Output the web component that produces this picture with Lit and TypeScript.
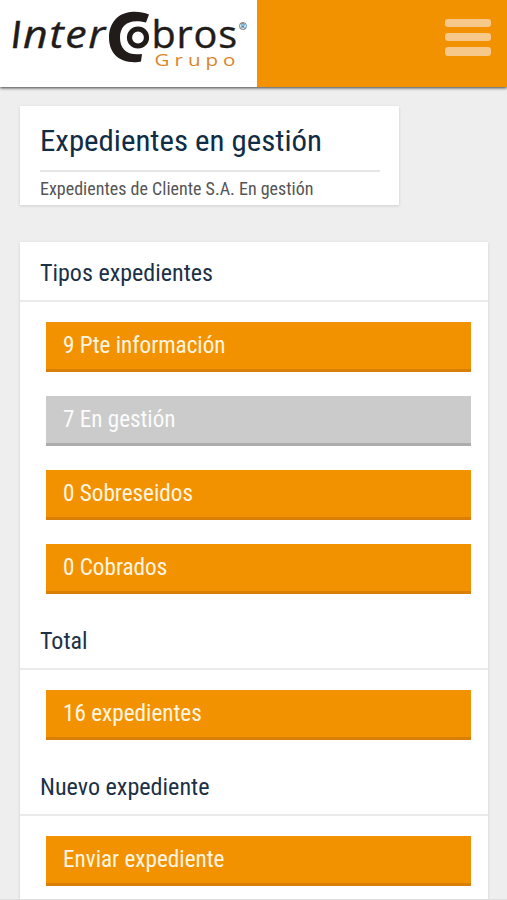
import { LitElement, html, css, svg } from "lit";
import { customElement, property } from "lit/decorators.js";

@customElement("condensed-label")
class CondensedLabel extends LitElement {
  @property() text = "";
  @property({ type: Number }) span = 100;
  @property({ type: Number }) baseline = 20;

  static styles = css`
    :host { display: block; height: 36px; }
    .line { display: block; width: 100%; height: 100%; overflow: visible; fill: currentColor; font-stretch: 75%; }
  `;

  render() {
    return html`<svg class="line">${svg`<text x="0" y=${this.baseline} textLength=${this.span} lengthAdjust="spacingAndGlyphs">${this.text}</text>`}</svg>`;
  }
}

@customElement("brand-logo")
class BrandLogo extends LitElement {
  static styles = css`
    :host { display: block; width: 257px; height: 87px; background: #fff; }
    .logo { display: block; }
    .word { font-family: "Open Sans", "Noto Sans", sans-serif; font-size: 37.5px; font-weight: 500; letter-spacing: 0.8px; fill: #211b19; stroke: #211b19; stroke-width: 0.4px; }
    .italic { font-style: italic; letter-spacing: 1.5px; }
    .initial { font-family: Lato, sans-serif; font-weight: 400; stroke-width: 0.5px; }
    .group { font-family: "Open Sans", "Noto Sans", sans-serif; font-size: 16.5px; font-weight: 500; letter-spacing: 4px; fill: #d9862b; }
    .mark { font-family: "Open Sans", "Noto Sans", sans-serif; font-size: 10px; font-weight: 700; fill: #55504e; }
    .ring { fill: none; stroke: #211b19; }
  `;

  render() {
    return html`
      <svg class="logo" width="257" height="87" viewBox="0 0 257 87">
        <text class="word italic initial" x="11.3" y="47.5">I</text>
        <text class="word italic" x="23" y="47.5" textLength="84" lengthAdjust="spacingAndGlyphs">nter</text>
        <path fill="#211b19" d="M149 14.5 C144 12.5 139 11.6 133 11.8 C118 12.5 109 23 109 37.5 C109 53 119 62.2 134 62.2 C137 62.2 139.5 62 141 61.5 L142 54 C127 56 120 49 120 37.5 C120 25 129 18 146 22.5 Z"/>
        <circle class="ring" cx="138" cy="37.5" r="8.5" stroke-width="5.2"/>
        <text class="word" x="151.5" y="47.5" textLength="86.5" lengthAdjust="spacingAndGlyphs">bros</text>
        <text class="mark" x="238.7" y="30">®</text>
        <text class="group" x="154.5" y="65.5" textLength="86" lengthAdjust="spacingAndGlyphs">Grupo</text>
      </svg>
    `;
  }
}

interface Item { text: string; span: number; active?: boolean; }
interface Group { title: string; span: number; items: Item[]; }

const groups: Group[] = [
  { title: "Tipos expedientes", span: 173, items: [
    { text: "9 Pte información", span: 162.5 },
    { text: "7 En gestión", span: 112.5, active: true },
    { text: "0 Sobreseidos", span: 130 },
    { text: "0 Cobrados", span: 104.3 },
  ] },
  { title: "Total", span: 47.5, items: [{ text: "16 expedientes", span: 138.8 }] },
  { title: "Nuevo expediente", span: 169.5, items: [{ text: "Enviar expediente", span: 161.5 }] },
];

@customElement("app-root")
class AppRoot extends LitElement {
  static styles = css`
    :host { display: block; height: 900px; overflow: hidden; background: #eee; font-family: Roboto, sans-serif; }
    * { box-sizing: border-box; }
    .page { display: flex; flex-direction: column; height: 900px; border-bottom: 1px solid #dedede; overflow: hidden; }
    .bar { display: flex; flex: none; justify-content: space-between; height: 87px; background: #f39200; box-shadow: 0 1px 3px rgba(0, 0, 0, 0.75); }
    .menu { display: flex; flex-direction: column; gap: 6px; margin: 19px 16px 0 0; width: 46px; }
    .stripe { height: 8.2px; border-radius: 3px; background: #f6c98a; }
    .intro { flex: none; width: 379px; height: 99px; margin: 19px 0 0 20px; padding: 16px 19px 0 20px; background: #fff; box-shadow: 0 1px 3px rgba(0, 0, 0, 0.13); }
    .title { height: 50px; border-bottom: 2px solid #e6e6e6; font-size: 30px; color: #112c45; }
    .sub { font-size: 17.8px; color: #555; }
    .panel { flex: none; width: 468px; height: 720px; margin: 37px 0 0 20px; background: #fff; box-shadow: 0 1px 3px rgba(0, 0, 0, 0.12); }
    .heading { height: 60px; padding: 12px 20px 0; border-bottom: 2px solid #ebebeb; font-size: 24px; color: #1b3146; }
    .list { display: flex; flex-direction: column; gap: 24.3px; padding: 19.8px 17.5px 16.3px 26px; }
    .button { height: 49.8px; padding: 6px 0 0 17px; background: #f39200; border-bottom: 3px solid #d97f08; font-size: 23px; color: #fff5e2; }
    .active { background: #cbcbcb; border-bottom-color: #acacac; color: #fbfbfb; }
  `;

  render() {
    return html`
      <div class="page">
        <header class="bar">
          <brand-logo></brand-logo>
          <div class="menu"><div class="stripe"></div><div class="stripe"></div><div class="stripe"></div></div>
        </header>
        <section class="intro">
          <div class="title"><condensed-label text="Expedientes en gestión" .span=${282} .baseline=${29}></condensed-label></div>
          <condensed-label class="sub" text="Expedientes de Cliente S.A. En gestión" .span=${273.5} .baseline=${23}></condensed-label>
        </section>
        <main class="panel">
          ${groups.map((g) => html`
            <section>
              <div class="heading"><condensed-label .text=${g.title} .span=${g.span} .baseline=${27.4}></condensed-label></div>
              <div class="list">
                ${g.items.map((i) => html`
                  <div class="button ${i.active ? "active" : ""}">
                    <condensed-label .text=${i.text} .span=${i.span} .baseline=${24.6}></condensed-label>
                  </div>`)}
              </div>
            </section>`)}
        </main>
      </div>
    `;
  }
}
